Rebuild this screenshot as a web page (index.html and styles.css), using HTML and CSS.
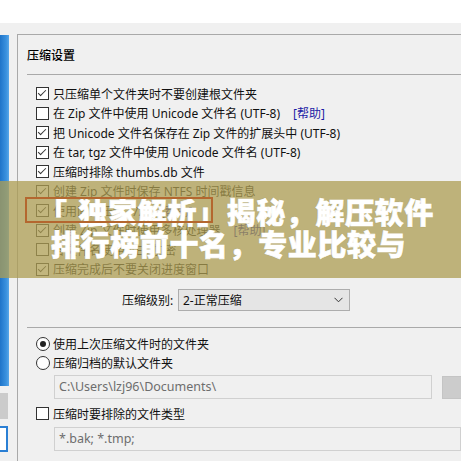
FILE: index.html
```html
<!DOCTYPE html>
<html lang="zh-CN">
<head>
<meta charset="utf-8">
<title>压缩设置</title>
<link rel="stylesheet" href="styles.css">
</head>
<body>
<div class="topbar"></div>
<div class="main">
  <div class="sidebar">
    <div class="side-blue"></div>
    <div class="side-gray"></div>
    <div class="side-box"></div>
  </div>
  <div class="panel">
    <div class="group-title">压缩设置</div>
    <div class="sep"></div>
    <div class="opts">
      <div class="row"><span class="cb on"></span><span>只压缩单个文件夹时不要创建根文件夹</span></div>
      <div class="row"><span class="cb"></span><span>在 Zip 文件中使用 Unicode 文件名 (UTF-8)</span><span class="help">[帮助]</span></div>
      <div class="row"><span class="cb on"></span><span>把 Unicode 文件名保存在 Zip 文件的扩展头中 (UTF-8)</span></div>
      <div class="row"><span class="cb on"></span><span>在 tar, tgz 文件中使用 Unicode 文件名 (UTF-8)</span></div>
      <div class="row"><span class="cb on"></span><span>压缩时排除 thumbs.db 文件</span></div>
      <div class="row"><span class="cb on"></span><span>创建 Zip 文件时保存 NTFS 时间戳信息</span></div>
      <div class="row"><span class="cb on"></span><span>使用固实压缩 (7z)</span><span class="help">[帮助]</span></div>
      <div class="row"><span class="cb on"></span><span>创建 Zip 文件时使用多核处理器</span><span class="help">[帮助]</span></div>
      <div class="row"><span class="cb"></span><span>各文件名使用 AES 加密</span></div>
      <div class="row"><span class="cb on"></span><span>压缩完成后不要关闭进度窗口</span></div>
    </div>
    <div class="level">
      <span class="level-label">压缩级别:</span>
      <div class="select"><span>2-正常压缩</span>
        <svg class="chev" width="9" height="6" viewBox="0 0 9 6"><path d="M0.5 0.8 L4.5 4.8 L8.5 0.8" fill="none" stroke="#333" stroke-width="1"/></svg>
      </div>
    </div>
    <div class="sep sep2"></div>
    <div class="opts opts2">
      <div class="row"><span class="rb on"></span><span>使用上次压缩文件时的文件夹</span></div>
      <div class="row"><span class="rb"></span><span>压缩归档的默认文件夹</span></div>
    </div>
    <div class="path-row">
      <div class="input input1">C:\Users\lzj96\Documents\</div>
      <div class="browse"></div>
    </div>
    <div class="opts opts3">
      <div class="row"><span class="cb"></span><span>压缩时要排除的文件类型</span></div>
    </div>
    <div class="input input2">*.bak; *.tmp;</div>
  </div>
</div>
<div class="overlay">
  <div class="headline"><span class="bracket">「</span>独家解析」揭秘，解压软件<br>排行榜前十名，专业比较与</div>
</div>
<div class="marker"></div>
</body>
</html>
```

FILE: styles.css
```css
html, body {
  margin: 0;
  padding: 0;
}
body {
  width: 461px;
  height: 461px;
  overflow: hidden;
  position: relative;
  background: #f0f0f0;
  font-family: "Noto Sans", "Noto Sans CJK SC", sans-serif;
  font-size: 12px;
  color: #111;
}
.topbar {
  height: 23px;
  background: #ffffff;
}
.main {
  display: flex;
  margin-top: 11px;
  height: 427px;
}
.sidebar {
  width: 17px;
  flex: none;
  display: flex;
  flex-direction: column;
}
.side-blue {
  width: 9px;
  height: 351px;
  margin-top: 1px;
  background: linear-gradient(to right, #1f74c9, #3b92df 70%, #5aa7e8);
}
.side-gray {
  width: 8px;
  height: 26px;
  margin-top: 7px;
  background: #cbcbcb;
}
.side-box {
  width: 12px;
  height: 22px;
  margin-left: -8px;
  margin-top: 7px;
  border: 2px solid #2a7fd4;
  background: #ffffff;
}
.panel {
  flex: 1;
  border-top: 1px solid #a9a9a9;
  border-left: 1px solid #a9a9a9;
  min-width: 0;
}
.group-title {
  margin: 13px 0 0 9px;
  height: 14px;
  line-height: 14px;
  font-family: "Noto Sans CJK SC", sans-serif;
  font-weight: 500;
  font-size: 12px;
  color: #000;
}
.sep {
  margin: 12px 0 0 9px;
  border-top: 1px solid #a9a9a9;
}
.opts {
  padding-left: 18px;
  margin-top: 9px;
}
.row {
  display: flex;
  align-items: center;
  height: 19.5px;
  white-space: nowrap;
}
.cb, .rb {
  flex: none;
  width: 11px;
  height: 11px;
  border: 1px solid #333;
  background: #fff;
  margin-right: 4px;
  position: relative;
}
.cb.on::after {
  content: "";
  position: absolute;
  left: 3px;
  top: 0px;
  width: 3px;
  height: 7px;
  border-right: 1.3px solid #333;
  border-bottom: 1.3px solid #333;
  transform: rotate(45deg);
}
.rb {
  border-radius: 50%;
  width: 12px;
  height: 12px;
  margin-right: 3px;
}
.rb.on::after {
  content: "";
  position: absolute;
  left: 3px;
  top: 3px;
  width: 6px;
  height: 6px;
  border-radius: 50%;
  background: #222;
}
.help {
  color: #1c1ca6;
  margin-left: 13px;
}
.level {
  display: flex;
  align-items: center;
  margin-top: 10px;
  padding-left: 104px;
  height: 22px;
}
.level-label {
  width: 56px;
}
.select {
  box-sizing: border-box;
  width: 172px;
  height: 22px;
  border: 1px solid #adadad;
  background: #e5e5e5;
  display: flex;
  align-items: center;
  justify-content: space-between;
  padding: 0 6px 0 4px;
}
.chev {
  display: block;
}
.sep2 {
  margin-top: 16px;
}
.opts2 {
  margin-top: 6px;
}
.path-row {
  display: flex;
  margin-left: 36px;
  margin-top: 2px;
}
.input {
  box-sizing: border-box;
  height: 24px;
  line-height: 22px;
  border: 1px solid #d0d0d0;
  background: #f0f0f0;
  color: #6d6d6d;
  padding-left: 4px;
  font-size: 12.5px;
  white-space: nowrap;
}
.input1 {
  flex: none;
  width: 378px;
}
.browse {
  flex: none;
  width: 30px;
  height: 23px;
  margin-left: 10px;
  margin-top: 1px;
  box-sizing: border-box;
  background: #cccccc;
  border: 1px solid #c4c4c4;
}
.opts3 {
  margin-top: 5px;
}
.input2 {
  margin: 3px 0 0 36px;
}
.overlay {
  position: absolute;
  left: 0;
  top: 181px;
  width: 461px;
  height: 97px;
  background: rgba(173, 157, 83, 0.75);
}
.headline {
  position: absolute;
  left: 51px;
  top: 14px;
  font-family: "Noto Sans CJK SC", sans-serif;
  font-weight: 900;
  font-size: 29px;
  line-height: 32px;
  letter-spacing: 0.6px;
  color: #ffffff;
  white-space: nowrap;
  -webkit-text-stroke: 0.7px #ffffff;
  text-shadow: 0 0 1px rgba(80, 70, 30, 0.5);
}
.bracket {
  position: relative;
  left: -13px;
  margin-right: -2px;
}
.marker {
  position: absolute;
  left: 25px;
  top: 197px;
  width: 184px;
  height: 22px;
  border: 2px solid #b4672f;
}
```
